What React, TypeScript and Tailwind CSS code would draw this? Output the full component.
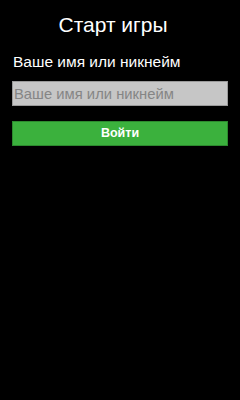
import { useState } from "react"

export default function App() {
  const [name, setName] = useState("")

  return (
    <div className="w-[240px] h-[400px] bg-black text-white font-['Liberation_Sans',Arial,sans-serif] flex flex-col">
      <h1 className="text-[21px] leading-none text-center pt-[14px] pr-[14px]">Старт игры</h1>
      <label className="text-[15.5px] leading-none pl-[13px] mt-[19px]">Ваше имя или никнейм</label>
      <input
        type="text"
        value={name}
        onChange={(e) => setName(e.target.value)}
        placeholder="Ваше имя или никнейм"
        className="mx-[12px] mt-[11px] h-[25px] px-[1px] pt-[2px] bg-[#c6c6c6] border border-[#9a9a9a] text-[14.8px] text-black placeholder:text-[#858585] outline-none"
      />
      <button className="mx-[12px] mt-[15px] h-[25px] bg-[#3bb13d] border border-[#2c8a2e] text-white text-[12.5px] font-bold">
        Войти
      </button>
    </div>
  )
}
